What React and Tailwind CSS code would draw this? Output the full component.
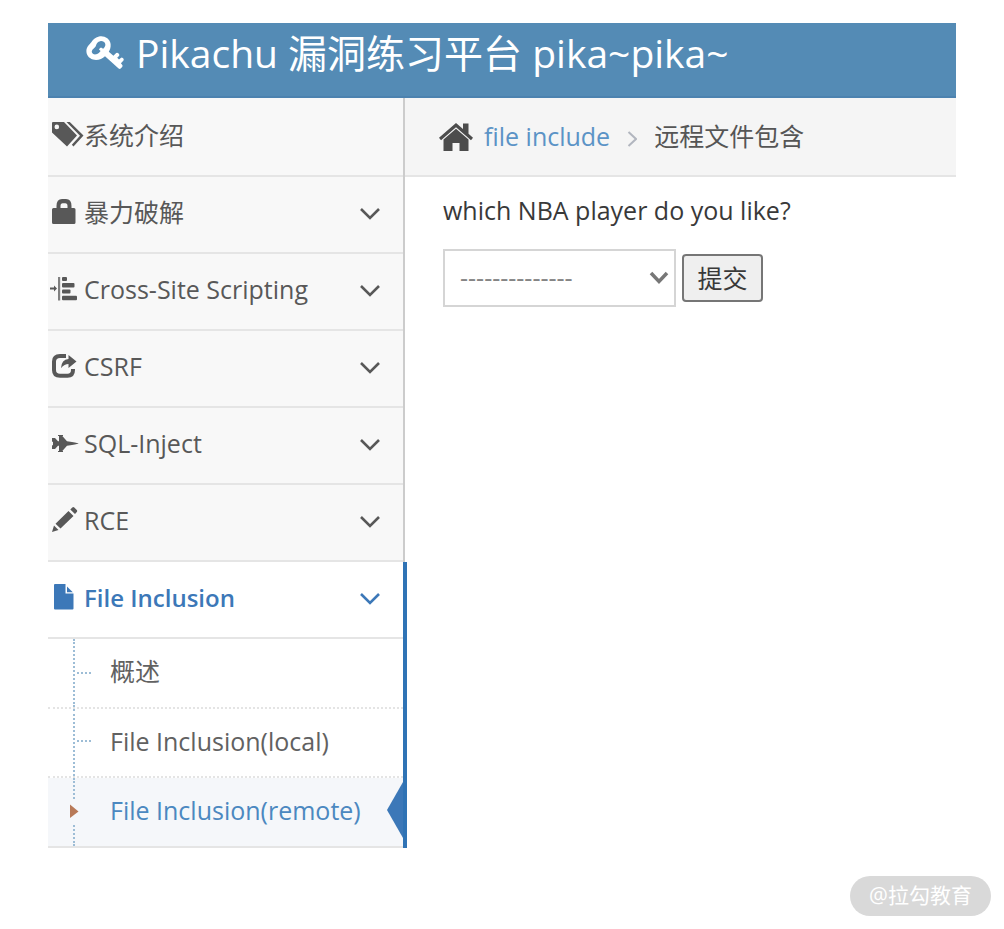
import React from 'react';

const shell = "font-['Open_Sans','Noto_Sans_CJK_SC',sans-serif]";

function Chevron() {
  return (
    <svg viewBox="0 0 20 14" className="ml-auto h-[14px] w-5 shrink-0" fill="none" stroke="currentColor" strokeWidth="2.6" aria-hidden="true">
      <path d="M1 3 10 12 19 3" />
    </svg>
  );
}

function KeyIcon() {
  return (
    <svg viewBox="0 0 38 36" className="h-9 w-[38px] shrink-0" aria-hidden="true">
      <path
        fill="#fff"
        fillRule="evenodd"
        d="M13 1.600C18 .4 24 3.500 24.600 9 24.900 12 24.200 14.500 22.800 16.700L27.400 20.800 30.200 18Q31.300 17.200 32.300 18.200L33 18.900Q33.800 19.900 33 20.900L31.200 22.800 33 24.600 34.800 22.900Q35.800 22.100 36.800 23.100L37.500 23.800Q38 24.600 37.500 25.400L34.900 28.200 36.300 30Q37 31 36.100 32L34.700 33.500Q33.700 34.400 32.600 33.500L19 21.300C16 24.300 11 25.700 7 24.500 2.500 23.200 .2 19.500 .4 15.500 .6 11.500 3.600 9.500 5.300 7.200 7.300 4.500 8.800 2.700 13 1.600ZM14.200 6.200C11.800 6.600 10.600 8.200 10 10.500 9.200 13 5.600 14.200 5.800 17 6.200 19 8.200 19.800 10.300 19.300 12.300 18.800 13.500 17.600 14.600 16L13.200 14.800Q12.800 14.200 13.400 13.700L14.600 12.700Q15.200 12.400 15.800 12.900L17.200 13.700C18.900 12.200 19.800 10.500 19.200 8.700 18.600 6.800 16.500 5.800 14.200 6.200Z"
      />
    </svg>
  );
}

function TagsIcon() {
  return (
    <svg viewBox="0 0 32 26" className="h-[26px] w-8 shrink-0" fill="currentColor" aria-hidden="true">
      <path fillRule="evenodd" d="M1 0H12L25 13.500 15 24.500 0 10.500V1Q0 0 1 0ZM4.800 2.600A2.300 2.300 0 1 0 4.800 7.200 2.300 2.300 0 1 0 4.800 2.600Z" />
      <path d="M14.500 0H17.800L31.500 13.500 21.500 24.500 19.800 22.800 28 13.700Z" />
    </svg>
  );
}

function LockIcon() {
  return (
    <svg viewBox="0 0 24 26" className="h-[26px] w-6 shrink-0" fill="currentColor" aria-hidden="true">
      <path fillRule="evenodd" d="M4.500 9V7Q4.500 0 10 0H14Q19.500 0 19.500 7V9H22Q23.500 9 23.500 10.500V23.500Q23.500 25 22 25H1.500Q0 25 0 23.500V10.500Q0 9 1.500 9ZM8.500 9H15.500V7Q15.500 4.200 13.300 4.200H10.700Q8.500 4.200 8.500 7Z" />
    </svg>
  );
}

function AlignIcon() {
  return (
    <svg viewBox="0 0 28 26" className="-ml-[2px] h-[26px] w-7 shrink-0" fill="currentColor" aria-hidden="true">
      <path d="M0 11.500H4V9.500L7 12.500 4 15.500V13.500H0Z" />
      <path d="M8 1H10.200V24.500H8Z" opacity=".75" />
      <rect x="12" y="1" width="5" height="4" rx="1" />
      <rect x="12" y="7" width="12.500" height="4.500" rx="1" />
      <rect x="12" y="13.500" width="8.500" height="4" rx="1" />
      <rect x="12" y="19.800" width="15" height="4.400" rx="1" />
    </svg>
  );
}

function ShareIcon() {
  return (
    <svg viewBox="0 0 26 26" className="h-[26px] w-[26px] shrink-0" aria-hidden="true">
      <path d="M14 3H8Q2 3 2 8.500V17Q2 22.800 8 22.800H15.500Q21 22.800 21 17V16" fill="none" stroke="currentColor" strokeWidth="4" />
      <path d="M16.500 2 24.500 8.500 16.500 15V11Q12.500 11 9 15 9.500 6.500 16.500 6Z" fill="currentColor" />
    </svg>
  );
}

function JetIcon() {
  return (
    <svg viewBox="0 0 27 20" className="h-5 w-[27px] shrink-0" fill="currentColor" aria-hidden="true">
      <path d="M0 5H3L6 8.300H7V3H6V2H11V3H10.300L15 8.200 20 9Q26.500 10.200 26.500 10.500 26.500 10.800 20 12L15 12.800 10.300 18H11V19H6V18H7V12.700H6L3 16H0V12.200H1V8.800H0Z" />
    </svg>
  );
}

function PencilIcon() {
  return (
    <svg viewBox="0 0 26 26" className="h-[26px] w-[26px] shrink-0" fill="currentColor" aria-hidden="true">
      <path d="M0 25 2 18.500 6.500 23ZM3.500 16.700 16.500 4 21.500 8.900 8.500 21.500ZM18.300 2.500 20.300 .5Q21.300 -.3 22.300 .6L24.800 3Q25.600 4 24.800 5L23 7.100Z" />
    </svg>
  );
}

function FileIcon() {
  return (
    <svg viewBox="0 0 20 26" className="h-[26px] w-5 shrink-0" fill="currentColor" aria-hidden="true">
      <path d="M1 0H11.500V9.500H19.500V24.500Q19.500 25.500 18.500 25.500H1Q0 25.500 0 24.500V1Q0 0 1 0Z" />
      <path d="M13 2.500 18.800 8.300H13Z" />
    </svg>
  );
}

function HomeIcon() {
  return (
    <svg viewBox="0 0 34 28" className="h-7 w-[34px] shrink-0" fill="#4c4c4c" aria-hidden="true">
      <path d="M17 0 24 6V.5H29.500V10.700L34 14.800 32 17.200 17 4.200 2 17.200 0 14.800Z" />
      <path d="M17 5.700 29.500 16.500V28H20.500V20H13.500V28H4.500V16.500Z" />
    </svg>
  );
}

const items = [
  { label: '系统介绍', icon: <TagsIcon />, leaf: true },
  { label: '暴力破解', icon: <LockIcon /> },
  { label: 'Cross-Site Scripting', icon: <AlignIcon /> },
  { label: 'CSRF', icon: <ShareIcon /> },
  { label: 'SQL-Inject', icon: <JetIcon /> },
  { label: 'RCE', icon: <PencilIcon /> },
];

function SideNav() {
  return (
    <nav className="w-[357px] shrink-0 border-r-2 border-[#ccc] bg-[#f8f8f8] pt-[2px] text-[#585858]">
      <ul>
        {items.map((item) => (
          <li key={item.label} className="border-b-2 border-[#e5e5e5]">
            <a href="#" className="flex h-[75px] items-center pr-[23px] pb-1 pl-1 text-[25px]">
              <span className="flex h-7 w-8 shrink-0 items-start">
                <span className="flex h-[26px] items-center">{item.icon}</span>
              </span>
              <span className="whitespace-nowrap">{item.label}</span>
              {!item.leaf && <Chevron />}
            </a>
          </li>
        ))}
        <li className="relative -mr-1 border-r-4 border-[#2f73b5] bg-white">
          <a href="#" className="flex h-[77px] items-center border-b-2 border-[#e5e5e5] pr-[23px] pb-1 pl-1 text-2xl font-semibold text-[#3c78b8]">
            <span className="flex h-7 w-8 shrink-0 items-start pl-[2px]"><FileIcon /></span>
            <span>File Inclusion</span>
            <Chevron />
          </a>
          <ul className="text-[25px] text-[#616161]">
            <li className="relative border-b-2 border-dotted border-[#e4e4e4]">
              <span className="absolute inset-y-0 left-[25px] border-l-2 border-dotted border-[#9dbdd6]" />
              <span className="absolute top-[33px] left-[29px] w-[14px] border-t-2 border-dotted border-[#9dbdd6]" />
              <a href="#" className="flex h-[68px] items-center pb-[2px] pl-[62px]">概述</a>
            </li>
            <li className="relative border-b-2 border-dotted border-[#e4e4e4]">
              <span className="absolute inset-y-0 left-[25px] border-l-2 border-dotted border-[#9dbdd6]" />
              <span className="absolute top-[31px] left-[29px] w-[14px] border-t-2 border-dotted border-[#9dbdd6]" />
              <a href="#" className="flex h-[67px] items-center pb-[2px] pl-[62px]">File Inclusion(local)</a>
            </li>
            <li className="relative border-b-2 border-[#e5e5e5] bg-[#f5f7fa]">
              <span className="absolute inset-y-0 left-[25px] border-l-2 border-dotted border-[#9dbdd6]" />
              <a href="#" className="flex h-[68px] items-center pb-[2px] pl-[62px] text-[#4b88c0]">File Inclusion(remote)</a>
              <svg viewBox="0 0 10 24" className="absolute top-[21px] left-[21px] h-6 w-[10px]" aria-hidden="true">
                <path d="M0 0H10V24H0Z" fill="#f5f7fa" />
                <path d="M1 5.500 9.500 12.500 1 19Z" fill="#b87a58" />
              </svg>
              <svg viewBox="0 0 16 56" className="absolute top-1 right-0 h-14 w-4" aria-hidden="true">
                <path d="M16 0V56L0 28Z" fill="#3c78b8" />
              </svg>
            </li>
          </ul>
        </li>
      </ul>
    </nav>
  );
}

export default function App() {
  return (
    <div className={`${shell} flex min-h-screen flex-col bg-white pt-[23px] text-[#393939]`}>
      <div className="mr-12 ml-12">
        <header className="flex h-[75px] items-start border-b-2 border-[#4c82af] bg-[#548bb5] pl-[38px] text-white">
          <a href="#" className="flex items-center gap-3 text-[39px] leading-[60px]">
            <KeyIcon />
            <h1 className="whitespace-nowrap">Pikachu 漏洞练习平台 pika~pika~</h1>
          </a>
        </header>
        <div className="flex items-start">
          <SideNav />
          <main className="min-w-0 flex-1">
            <div className="flex h-[79px] items-center border-b-2 border-[#e5e5e5] bg-[#f5f5f5] pl-[34px] text-[25px]">
              <HomeIcon />
              <a href="#" className="ml-[11px] text-[#5b93c6]">file include</a>
              <svg viewBox="0 0 10 16" className="mx-[17px] mt-1 h-4 w-[10px]" fill="none" stroke="#b2b6bf" strokeWidth="2" aria-hidden="true">
                <path d="M1.500 1 9 8 1.500 15" />
              </svg>
              <span className="text-[#555]">远程文件包含</span>
            </div>
            <form className="pt-[11px] pl-[38px]" onSubmit={(e) => e.preventDefault()}>
              <label htmlFor="player" className="block text-[25px] leading-[44px]">which NBA player do you like?</label>
              <div className="mt-[17px] flex items-center gap-[6px]">
                <div className="relative">
                  <select id="player" className="block h-[58px] w-[233px] appearance-none border-2 border-[#d5d5d5] bg-white pl-[15px] text-[25px] text-[#858585]">
                    <option>--------------</option>
                  </select>
                  <svg viewBox="0 0 20 14" className="pointer-events-none absolute top-[22px] right-[7px] h-[14px] w-5" fill="none" stroke="#777" strokeWidth="3.5" aria-hidden="true">
                    <path d="M2 2 10 10.500 18 2" />
                  </svg>
                </div>
                <button type="submit" className="h-12 w-[81px] rounded-[4px] border-2 border-[#767676] bg-[#efefef] text-[25px] leading-none">提交</button>
              </div>
            </form>
          </main>
        </div>
      </div>
      <div className="mt-auto mr-[13px] mb-[13px] flex h-10 w-[141px] items-center justify-center self-end rounded-full bg-[#d9d9d9] text-[21px] text-white">@拉勾教育</div>
    </div>
  );
}
